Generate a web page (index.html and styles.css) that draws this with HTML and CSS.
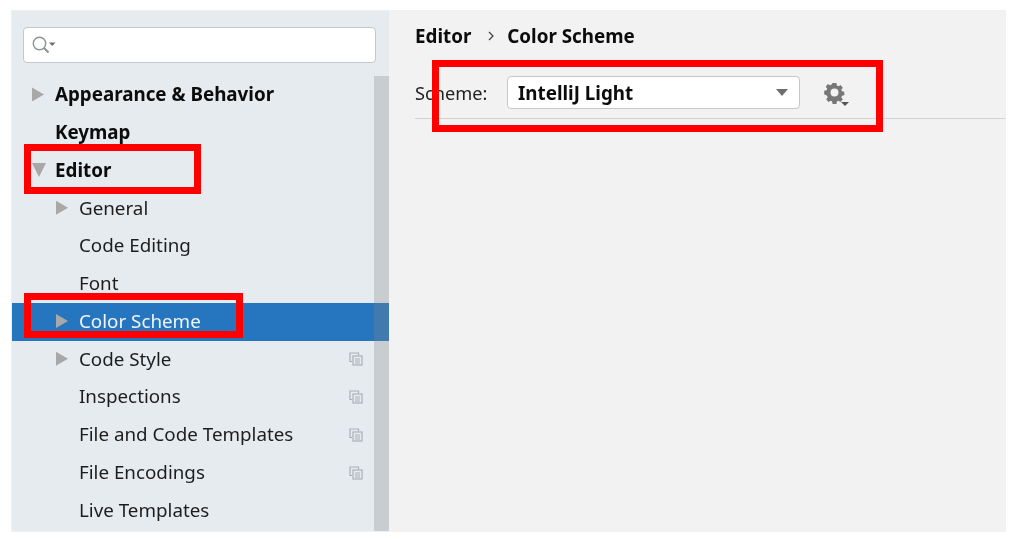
FILE: index.html
```html
<!DOCTYPE html>
<html lang="en">
<head>
<meta charset="utf-8">
<title>Settings - Color Scheme</title>
<link rel="stylesheet" href="styles.css">
</head>
<body>
<div class="window">
  <aside class="sidebar">
    <div class="search">
      <svg class="search-icon" width="26" height="20" viewBox="0 0 26 20"><circle cx="8.500" cy="8.500" r="6.200" fill="none" stroke="#8d9194" stroke-width="1.400"/><path d="M13 13l4.500 4.500" stroke="#8d9194" stroke-width="2" fill="none"/><path d="M18 7.500h6.500l-3.250 3.500z" fill="#6e6e6e"/></svg>
    </div>
    <div class="tree-wrap">
      <ul class="tree">
        <li class="row top"><span class="arrow right"></span>Appearance &amp; Behavior</li>
        <li class="row top"><span class="arrow none"></span>Keymap</li>
        <li class="row top"><span class="arrow down"></span>Editor</li>
        <li class="row sub"><span class="arrow right"></span>General</li>
        <li class="row sub"><span class="arrow none"></span>Code Editing</li>
        <li class="row sub"><span class="arrow none"></span>Font</li>
        <li class="row sub selected"><span class="arrow right"></span>Color Scheme</li>
        <li class="row sub"><span class="arrow right"></span>Code Style<svg class="copy" width="14" height="14" viewBox="0 0 14 14"><use href="#copy-icon"/></svg></li>
        <li class="row sub"><span class="arrow none"></span>Inspections<svg class="copy" width="14" height="14" viewBox="0 0 14 14"><use href="#copy-icon"/></svg></li>
        <li class="row sub"><span class="arrow none"></span>File and Code Templates<svg class="copy" width="14" height="14" viewBox="0 0 14 14"><use href="#copy-icon"/></svg></li>
        <li class="row sub"><span class="arrow none"></span>File Encodings<svg class="copy" width="14" height="14" viewBox="0 0 14 14"><use href="#copy-icon"/></svg></li>
        <li class="row sub"><span class="arrow none"></span>Live Templates</li>
      </ul>
      <div class="scrollbar"></div>
    </div>
  </aside>
  <main class="content">
    <div class="crumbs"><span>Editor</span><svg class="chev" width="8" height="12" viewBox="0 0 8 12"><path d="M2 2l4 4-4 4" fill="none" stroke="#444" stroke-width="1.300"/></svg><span>Color Scheme</span></div>
    <div class="scheme">
      <span class="scheme-label">Scheme:</span>
      <div class="select"><span>IntelliJ Light</span><i class="select-arrow"></i></div>
      <svg class="gear" width="26" height="26" viewBox="0 0 26 26"><path fill="#777" fill-rule="evenodd" d="M8.600 2h3.800l.5 2.600 1.500.7 2.200-1.400 2.200 2.900-1.500 1.900.6 1.500 2.400.5v3.600l-2.400.5-.6 1.500 1.500 1.900-2.200 2.900-2.200-1.400-1.500.7-.5 2.600H8.600l-.5-2.600-1.500-.7-2.200 1.400-2.200-2.900 1.500-1.900-.6-1.500L.2 13.300V9.700l2.400-.5.6-1.500-1.500-1.900 2.200-2.900 2.200 1.400 1.500-.7zM10.500 7.500a4 4 0 1 0 0 8 4 4 0 0 0 0-8z"/><path fill="#555" d="M17 21h8l-4 4z"/></svg>
    </div>
    <div class="rule"></div>
  </main>
</div>
<div class="mark mark-editor"></div>
<div class="mark mark-color"></div>
<div class="mark mark-scheme"></div>
<svg class="defs" width="0" height="0"><defs><g id="copy-icon" fill="none" stroke="#a9b0b5" stroke-width="1.200"><path d="M9.500 3V1H1v8.500h2"/><rect x="4" y="4" width="9" height="9" fill="#e6ebf0"/><path d="M6 7h5M6 9h5M6 11h5" stroke-width="1"/></g></defs></svg>
</body>
</html>
```
FILE: styles.css
```css
* { box-sizing: border-box; }
html, body { margin: 0; padding: 0; }
body {
  width: 1017px;
  height: 542px;
  background: #fff;
  overflow: hidden;
  padding: 11px 12px 11px 12px;
  position: relative;
  font-family: "Noto Sans", "Open Sans", sans-serif;
  font-size: 18.800px;
  color: #1d1d1d;
  filter: blur(0.45px);
}
.window {
  display: flex;
  width: 993px;
  height: 520px;
  outline: 1px solid #f0f0f0;
}
.sidebar {
  width: 377px;
  background: #e6ebf0;
  display: flex;
  flex-direction: column;
  padding-top: 16px;
}
.search {
  margin-left: 11px;
  width: 353px;
  height: 36px;
  background: #fff;
  border: 1.500px solid #c4c8cb;
  border-radius: 4px;
  display: flex;
  align-items: center;
  padding-left: 7px;
}
.tree-wrap {
  flex: 1;
  position: relative;
  margin-top: 13px;
  min-height: 0;
}
.tree { list-style: none; margin: 0; padding: 0; }
.row {
  height: 37.750px;
  padding-bottom: 1px;
  display: flex;
  align-items: center;
  position: relative;
  white-space: nowrap;
}
.row.top { font-weight: 700; padding-left: 20px; color: #0c0c0c; }
.row.sub { padding-left: 44px; }
.row.selected { background: #2675bf; color: #f0f5fa; box-shadow: 0 1px 0 #2675bf; }
.arrow { width: 23px; flex: none; display: inline-block; height: 0; }
.arrow.right {
  height: 14px;
  background: #a8a8a8;
  clip-path: polygon(0 0, 12px 7px, 0 14px);
}
.arrow.down {
  height: 14px;
  background: #a8a8a8;
  clip-path: polygon(0 0, 14px 0, 7px 14px);
}
.copy { position: absolute; left: 337px; top: 12px; }
.scrollbar {
  position: absolute;
  right: 0;
  top: 0;
  bottom: 0;
  width: 15px;
  background: rgba(130, 135, 140, 0.3);
}
.content {
  flex: 1;
  background: #f2f2f2;
  padding: 10px 0 0 26px;
  display: flex;
  flex-direction: column;
}
.crumbs {
  display: flex;
  align-items: center;
  height: 30px;
  font-weight: 700;
  color: #0c0c0c;
}
.chev { margin: 0 12px 0 16px; }
.scheme {
  display: flex;
  align-items: center;
  margin-top: 25px;
  height: 33px;
}
.scheme-label { width: 92px; font-size: 18.200px; color: #222; }
.select {
  width: 293px;
  height: 33px;
  background: #fff;
  border: 1.500px solid #c4c8cb;
  border-radius: 4px;
  display: flex;
  align-items: center;
  justify-content: space-between;
  padding: 0 11px 0 10px;
  font-weight: 700;
  color: #0c0c0c;
}
.select-arrow {
  width: 0;
  height: 0;
  border-left: 6px solid transparent;
  border-right: 6px solid transparent;
  border-top: 7px solid #6e6e6e;
}
.gear { margin: 3px 0 0 24px; }
.rule { height: 1px; background: #d2d2d2; margin-top: 9px; }
.mark {
  position: absolute;
  border: 7.500px solid #ff0000;
}
.mark-editor { left: 24px; top: 144px; width: 177px; height: 50px; }
.mark-color { left: 24px; top: 293px; width: 219px; height: 45px; }
.mark-scheme { left: 432px; top: 60px; width: 451px; height: 72px; }
.defs { position: absolute; }
```
